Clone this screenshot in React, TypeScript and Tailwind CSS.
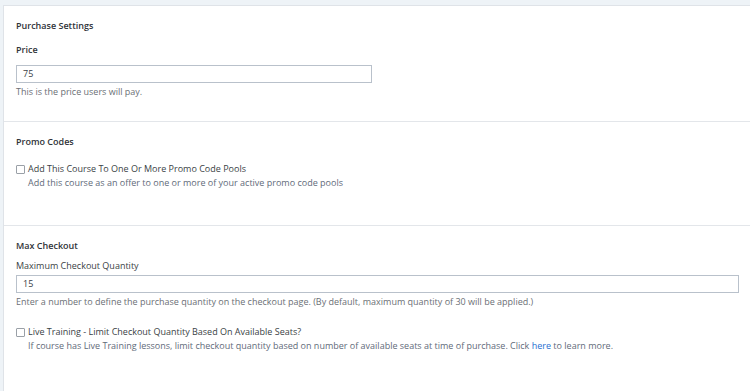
import React from "react";

const font = { fontFamily: '"Open Sans", "Liberation Sans", sans-serif' };

const Checkbox: React.FC = () => (
  <span className="inline-block w-[9px] h-[9px] border border-[#9aa0a7] rounded-[1px] bg-white shrink-0 mt-[3px]" />
);

export default function App() {
  return (
    <div
      className="w-[750px] h-[391px] bg-[#eef3f7] pt-[5px] pl-[3px] overflow-hidden"
      style={font}
    >
      <div className="bg-white h-full border-t border-l border-[#dfe3e8] text-[9px] text-[#3a3f45]">
        {/* purchase settings */}
        <div className="h-[116px] border-b border-[#e3e6ea] pl-[12px] pt-[14px]">
          <div className="font-semibold text-[#2f3338] leading-[12px]">Purchase Settings</div>
          <div className="font-semibold text-[#2f3338] leading-[12px] mt-[12px]">Price</div>
          <div className="mt-[9px] w-[356px] h-[18px] border border-[#b9c1cb] px-[6px] flex items-center">
            75
          </div>
          <div className="text-[#6b6f75] mt-[3px] leading-[12px]">This is the price users will pay.</div>
        </div>

        {/* promo codes */}
        <div className="h-[104px] border-b border-[#e3e6ea] pl-[12px] pt-[14px]">
          <div className="font-semibold text-[#2f3338] leading-[12px]">Promo Codes</div>
          <div className="flex gap-[3px] mt-[14px]">
            <Checkbox />
            <div className="leading-[14px]">
              <div>Add This Course To One Or More Promo Code Pools</div>
              <div className="text-[#5f6b7a]">Add this course as an offer to one or more of your active promo code pools</div>
            </div>
          </div>
        </div>

        {/* max checkout */}
        <div className="pl-[12px] pr-[11px] pt-[14px]">
          <div className="font-semibold text-[#2f3338] leading-[12px]">Max Checkout</div>
          <div className="leading-[12px] mt-[8px]">Maximum Checkout Quantity</div>
          <div className="mt-[3px] w-full h-[18px] border border-[#b9c1cb] px-[6px] flex items-center">
            15
          </div>
          <div className="text-[#6b6f75] mt-[3px] leading-[12px]">
            Enter a number to define the purchase quantity on the checkout page. (By default, maximum quantity of 30 will be applied.)
          </div>
          <div className="flex gap-[3px] mt-[17px]">
            <Checkbox />
            <div className="leading-[14px]">
              <div>Live Training - Limit Checkout Quantity Based On Available Seats?</div>
              <div className="text-[#5f6b7a]">
                If course has Live Training lessons, limit checkout quantity based on number of available seats at time of purchase. Click{" "}
                <a href="#" className="text-[#1f6fd1]">here</a> to learn more.
              </div>
            </div>
          </div>
        </div>
      </div>
    </div>
  );
}
